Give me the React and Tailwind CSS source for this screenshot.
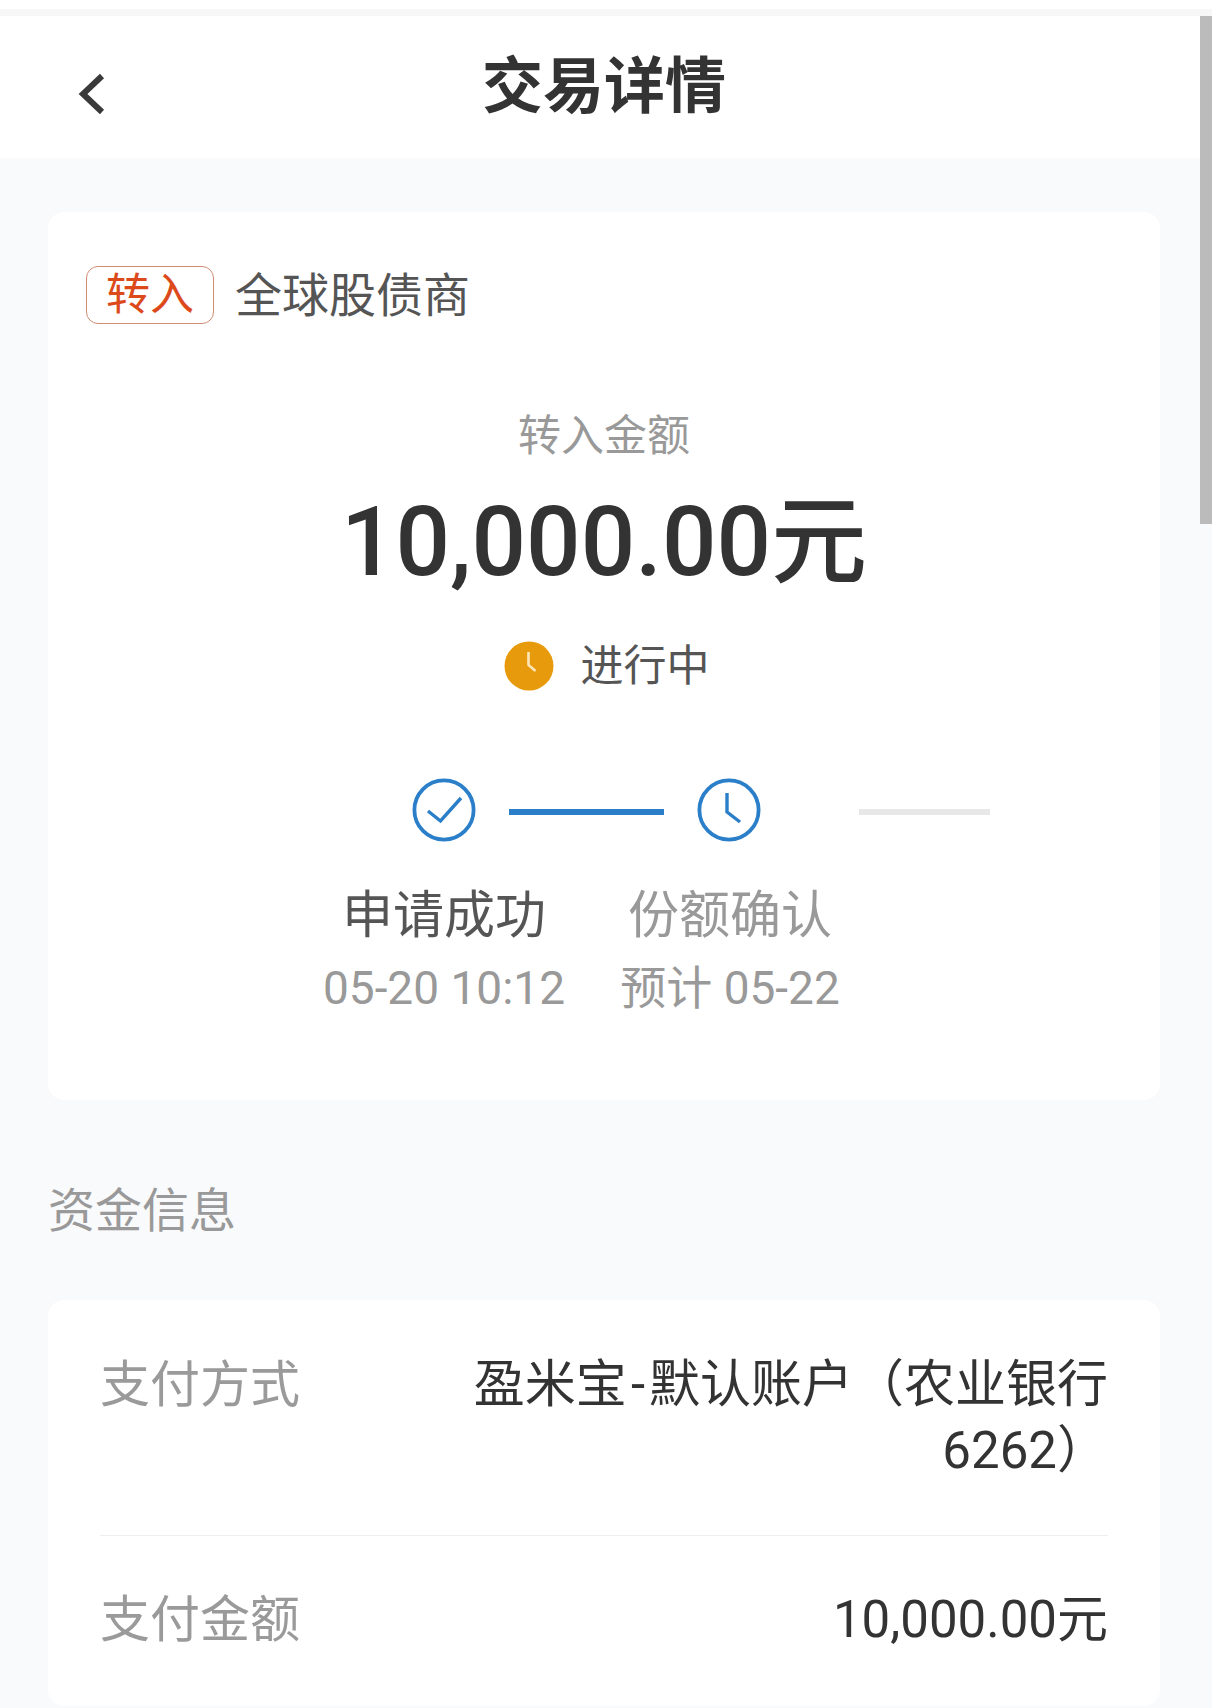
const FONT = { fontFamily: 'Roboto, "Noto Sans CJK SC", sans-serif' };

function BackIcon() {
  return (
    <svg width="30" height="42" viewBox="0 0 30 42" fill="none" stroke="#3a3a3a" strokeWidth="6">
      <path d="M25 3L6 21l19 18" />
    </svg>
  );
}

function CheckCircle() {
  return (
    <svg width="64" height="64" viewBox="0 0 64 64" fill="none" stroke="#2b7fc9" strokeWidth="3.8">
      <circle cx="32" cy="32" r="29.6" />
      <path d="M16 33l12.5 10 20.5-23" strokeWidth="3.4" />
    </svg>
  );
}

function ClockCircle() {
  return (
    <svg width="64" height="64" viewBox="0 0 64 64" fill="none" stroke="#2b7fc9" strokeWidth="3.8">
      <circle cx="32" cy="32" r="29.6" />
      <path d="M30 15v19l13 10" strokeWidth="3.4" />
    </svg>
  );
}

function StatusClock() {
  return (
    <svg width="50" height="50" viewBox="0 0 50 50" fill="none">
      <circle cx="25" cy="25" r="24.5" fill="#e79a0b" />
      <path d="M24.5 11v13l7 6" stroke="#fde7b8" strokeWidth="2.6" />
    </svg>
  );
}

function InfoRow({ label, children }) {
  return (
    <div className="flex items-start justify-between">
      <span className="text-[50px] leading-[66px] text-[#9a9a9a]">{label}</span>
      <div className="w-[640px] text-right text-[51px] leading-[66px] text-[#333]">{children}</div>
    </div>
  );
}

export default function App() {
  return (
    <div style={FONT} className="relative h-[1708px] w-[1216px] overflow-hidden bg-[#f9fafc]">
      <div className="h-[9px] bg-white" />
      <div className="h-[7px] bg-[#f7f7f7]" />

      {/* Header */}
      <div className="relative flex h-[142px] items-center justify-center bg-white pr-[8px]">
        <div className="absolute left-[77px] top-[57px]">
          <BackIcon />
        </div>
        <h1 className="text-[61px] font-bold leading-none text-[#333]">交易详情</h1>
      </div>

      {/* Summary card */}
      <div className="mx-[48px] mt-[54px] h-[888px] w-[1112px] rounded-[16px] bg-white">
        <div className="flex items-center pl-[38px] pt-[54px]">
          <span className="flex h-[58px] w-[128px] items-center justify-center rounded-[12px] border border-[#cf8d72] text-[44px] leading-none text-[#dc4a1c]">
            转入
          </span>
          <span className="ml-[21px] text-[47px] leading-none text-[#555]">全球股债商</span>
        </div>

        <p className="mt-[91px] text-center text-[43px] leading-none text-[#999]">转入金额</p>

        <p className="mt-[24px] text-center text-[96px] font-medium leading-[120px] text-[#333]">10,000.00元</p>

        <div className="mt-[39px] flex items-center justify-center pl-[5px]">
          <StatusClock />
          <span className="ml-[27px] text-[43px] leading-none text-[#555]">进行中</span>
        </div>

        {/* Progress */}
        <div className="ml-[364px] mt-[87px] flex items-center">
          <CheckCircle />
          <div className="ml-[33px] h-[6px] w-[155px] translate-y-[2px] bg-[#2b7fc9]" />
          <div className="ml-[33px]">
            <ClockCircle />
          </div>
          <div className="ml-[98px] h-[6px] w-[131px] translate-y-[2px] bg-[#e8e8e8]" />
        </div>

        <div className="ml-[253px] mt-[41px] flex">
          <div className="w-[286px] text-center">
            <p className="text-[51px] leading-[66px] text-[#555]">申请成功</p>
            <p className="mt-[9px] text-[46px] leading-[60px] text-[#999]">05-20 10:12</p>
          </div>
          <div className="w-[286px] text-center">
            <p className="text-[51px] leading-[66px] text-[#999]">份额确认</p>
            <p className="mt-[9px] text-[46px] leading-[60px] text-[#999]">预计 05-22</p>
          </div>
        </div>
      </div>

      <p className="ml-[48px] mt-[86px] text-[47px] leading-[50px] text-[#999]">资金信息</p>

      {/* Funding info card */}
      <div className="mx-[48px] mt-[64px] h-[406px] w-[1112px] rounded-[16px] bg-white px-[52px] pt-[52px]">
        <div className="pb-[51px]">
          <InfoRow label="支付方式">
            盈米宝<span className="mx-[4px]">-</span>默认账户（农业银行6262）
          </InfoRow>
        </div>
        <div className="h-px bg-[#eeeeee]" />
        <div className="pt-[51px]">
          <InfoRow label="支付金额">10,000.00元</InfoRow>
        </div>
      </div>

      {/* Scrollbar */}
      <div className="absolute right-[4px] top-[16px] h-[508px] w-[12px] bg-[#bbbbbb]" />
      <div className="absolute right-0 top-0 h-full w-[4px] bg-white" />
    </div>
  );
}
